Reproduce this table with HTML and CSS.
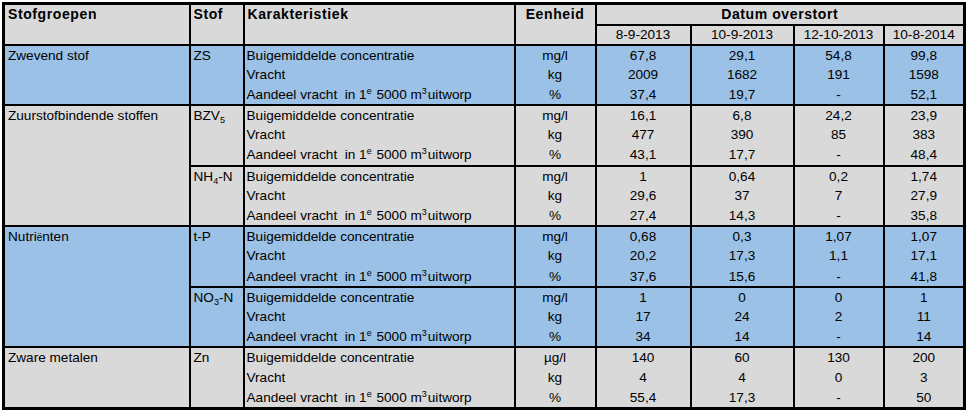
FILE: index.html
```html
<!DOCTYPE html>
<html>
<head>
<meta charset="utf-8">
<link rel="stylesheet" href="styles.css">
</head>
<body>
<table class="tbl">
  <colgroup>
    <col class="c-grp"><col class="c-stof"><col class="c-kar"><col class="c-unit">
    <col class="c-d1"><col class="c-d2"><col class="c-d3"><col class="c-d4">
  </colgroup>
  <thead>
    <tr class="h1">
      <th rowspan="2" class="left">Stofgroepen</th>
      <th rowspan="2" class="left">Stof</th>
      <th rowspan="2" class="left">Karakteristiek</th>
      <th rowspan="2">Eenheid</th>
      <th colspan="4">Datum overstort</th>
    </tr>
    <tr class="h2">
      <td>8-9-2013</td><td>10-9-2013</td><td>12-10-2013</td><td>10-8-2014</td>
    </tr>
  </thead>
  <tbody class="blue">
    <tr class="first">
      <td rowspan="3" class="grp">Zwevend stof</td>
      <td rowspan="3" class="stof">ZS</td>
      <td class="kar">Buigemiddelde concentratie</td><td>mg/l</td>
      <td>67,8</td><td>29,1</td><td>54,8</td><td>99,8</td>
    </tr>
    <tr><td class="kar">Vracht</td><td>kg</td><td>2009</td><td>1682</td><td>191</td><td>1598</td></tr>
    <tr><td class="kar">Aandeel vracht &nbsp;in 1<sup>e</sup> 5000 m<sup>3</sup>uitworp</td><td>%</td><td>37,4</td><td>19,7</td><td>-</td><td>52,1</td></tr>
  </tbody>
  <tbody class="gray">
    <tr class="first">
      <td rowspan="6" class="grp">Zuurstofbindende stoffen</td>
      <td rowspan="3" class="stof">BZV<sub>5</sub></td>
      <td class="kar">Buigemiddelde concentratie</td><td>mg/l</td>
      <td>16,1</td><td>6,8</td><td>24,2</td><td>23,9</td>
    </tr>
    <tr><td class="kar">Vracht</td><td>kg</td><td>477</td><td>390</td><td>85</td><td>383</td></tr>
    <tr><td class="kar">Aandeel vracht &nbsp;in 1<sup>e</sup> 5000 m<sup>3</sup>uitworp</td><td>%</td><td>43,1</td><td>17,7</td><td>-</td><td>48,4</td></tr>
    <tr class="first">
      <td rowspan="3" class="stof">NH<sub>4</sub>-N</td>
      <td class="kar">Buigemiddelde concentratie</td><td>mg/l</td>
      <td>1</td><td>0,64</td><td>0,2</td><td>1,74</td>
    </tr>
    <tr><td class="kar">Vracht</td><td>kg</td><td>29,6</td><td>37</td><td>7</td><td>27,9</td></tr>
    <tr><td class="kar">Aandeel vracht &nbsp;in 1<sup>e</sup> 5000 m<sup>3</sup>uitworp</td><td>%</td><td>27,4</td><td>14,3</td><td>-</td><td>35,8</td></tr>
  </tbody>
  <tbody class="blue">
    <tr class="first">
      <td rowspan="6" class="grp">Nutri<span class="small">ë</span>nten</td>
      <td rowspan="3" class="stof">t-P</td>
      <td class="kar">Buigemiddelde concentratie</td><td>mg/l</td>
      <td>0,68</td><td>0,3</td><td>1,07</td><td>1,07</td>
    </tr>
    <tr><td class="kar">Vracht</td><td>kg</td><td>20,2</td><td>17,3</td><td>1,1</td><td>17,1</td></tr>
    <tr><td class="kar">Aandeel vracht &nbsp;in 1<sup>e</sup> 5000 m<sup>3</sup>uitworp</td><td>%</td><td>37,6</td><td>15,6</td><td>-</td><td>41,8</td></tr>
    <tr class="first">
      <td rowspan="3" class="stof">NO<sub>3</sub>-N</td>
      <td class="kar">Buigemiddelde concentratie</td><td>mg/l</td>
      <td>1</td><td>0</td><td>0</td><td>1</td>
    </tr>
    <tr><td class="kar">Vracht</td><td>kg</td><td>17</td><td>24</td><td>2</td><td>11</td></tr>
    <tr><td class="kar">Aandeel vracht &nbsp;in 1<sup>e</sup> 5000 m<sup>3</sup>uitworp</td><td>%</td><td>34</td><td>14</td><td>-</td><td>14</td></tr>
  </tbody>
  <tbody class="gray">
    <tr class="first">
      <td rowspan="3" class="grp">Zware metalen</td>
      <td rowspan="3" class="stof">Zn</td>
      <td class="kar">Buigemiddelde concentratie</td><td>µg/l</td>
      <td>140</td><td>60</td><td>130</td><td>200</td>
    </tr>
    <tr><td class="kar">Vracht</td><td>kg</td><td>4</td><td>4</td><td>0</td><td>3</td></tr>
    <tr><td class="kar">Aandeel vracht &nbsp;in 1<sup>e</sup> 5000 m<sup>3</sup>uitworp</td><td>%</td><td>55,4</td><td>17,3</td><td>-</td><td>50</td></tr>
  </tbody>
</table>
</body>
</html>
```

FILE: styles.css
```css
html, body {
  margin: 0;
  padding: 0;
  background: #ffffff;
}
body {
  padding: 2px 0 0 2px;
  font-family: "Liberation Sans", Arial, sans-serif;
  font-size: 13.6px;
  color: #000;
}
.tbl {
  border-collapse: collapse;
  table-layout: fixed;
  border: 3px solid #000;
}
.c-grp { width: 186px; }
.c-stof { width: 54px; }
.c-kar { width: 271px; }
.c-unit { width: 81px; }
.c-d1 { width: 95px; }
.c-d2 { width: 103px; }
.c-d3 { width: 90px; }
.c-d4 { width: 81px; }

.tbl th, .tbl td {
  padding: 0 3px;
  border-left: 2px solid #000;
  border-right: 2px solid #000;
  text-align: center;
  vertical-align: top;
  white-space: nowrap;
  line-height: 19px;
  overflow: hidden;
}
.tbl thead th, .tbl thead td {
  background: #d9d9d9;
  border-bottom: 2px solid #000;
}
.tbl th {
  font-weight: bold;
  letter-spacing: 0.6px;
  font-size: 14px;
}
.tbl th.left { text-align: left; }
.h1 { height: 21px; }
.h2 { height: 20px; }
.h1 th { line-height: 18px; }
.h2 td { line-height: 18px; }

.tbl tbody tr { height: 20.2px; }
.tbl tbody tr.first td { border-top: 2px solid #000; }
.blue td { background: #9bc2e6; }
.gray td { background: #d9d9d9; }

.tbl td.grp, .tbl td.stof { text-align: left; }
.tbl td.kar { text-align: left; padding-left: 2px; }

sub, sup {
  font-size: 9px;
  line-height: 0;
}
sub { vertical-align: -3px; }
sup { vertical-align: 5px; padding-right: 1px; }
.small { font-size: 10px; }
```
